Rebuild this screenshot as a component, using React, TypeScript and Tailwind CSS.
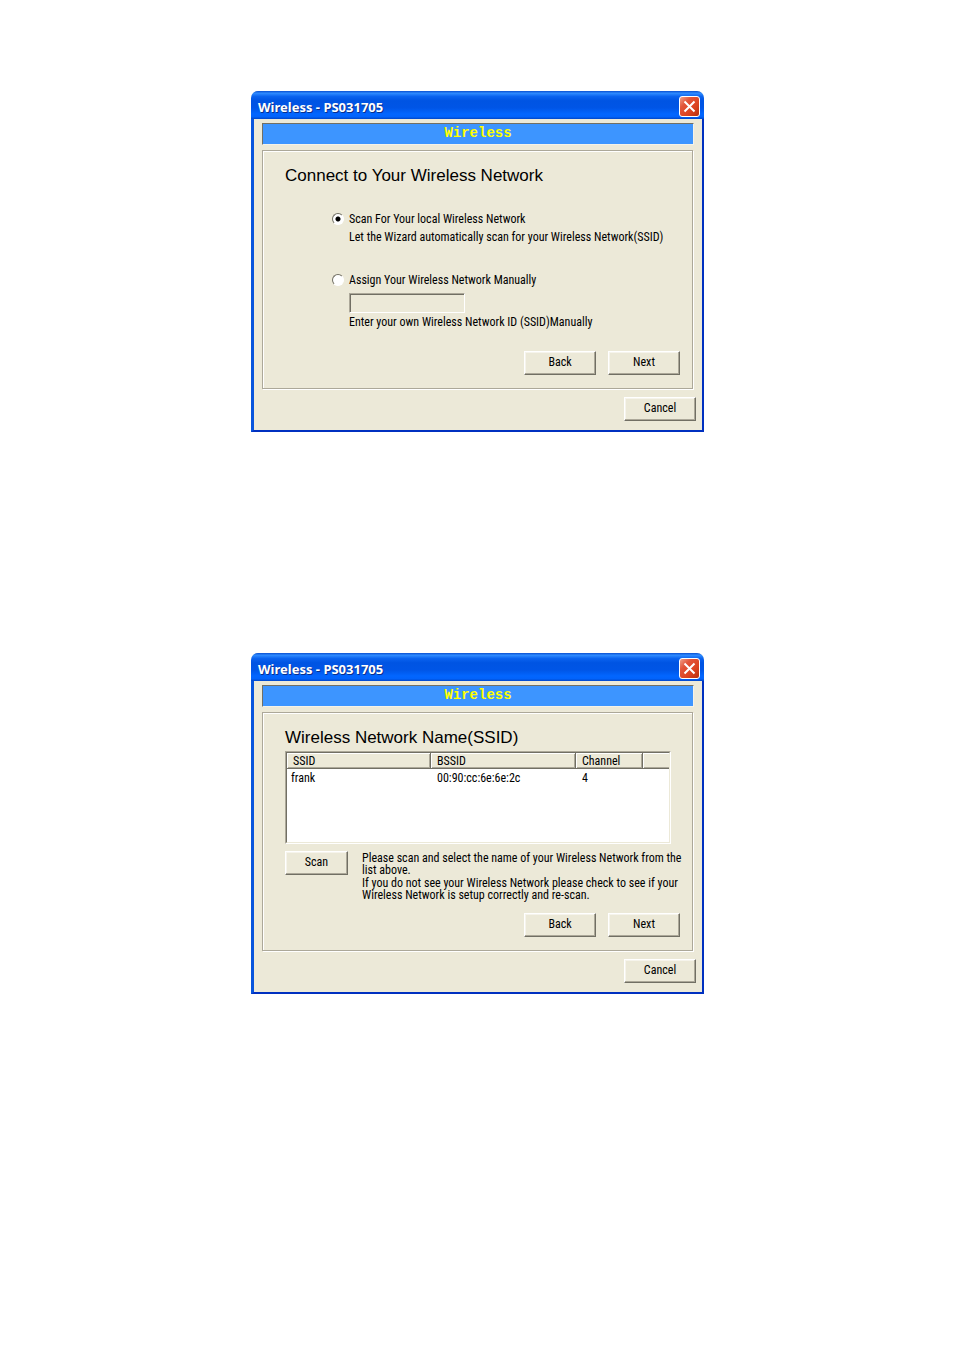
import { useState, type ReactNode } from "react";

const networks = [{ ssid: "frank", bssid: "00:90:cc:6e:6e:2c", channel: 4 }];

function Button({ children, className = "w-[72px]" }: { children: ReactNode; className?: string }) {
    return (
        <button
            type="button"
            className={`h-6 shrink-0 border border-t-white border-l-white border-r-[#716f64] border-b-[#716f64] bg-[#ece9d8] pb-0.5 text-center leading-3 shadow-[inset_-1px_-1px_0_#aca899,inset_1px_1px_0_#f6f4ec] ${className}`}
        >
            {children}
        </button>
    );
}

function Dialog({ title, heading, children }: { title: string; heading: string; children: ReactNode }) {
    return (
        <section className="w-full max-w-[453px] overflow-hidden rounded-t-[7px] bg-[#ece9d8] text-[12px] leading-3 text-black">
            <header className="flex h-7 items-center justify-between bg-[linear-gradient(180deg,#0a4fd0_0%,#2f8bff_8%,#0a62ee_20%,#0054e3_35%,#0055e6_60%,#0266ff_82%,#0263fb_92%,#0046c8_100%)] pt-0.5 pr-1 pl-[7px]">
                <h1 className="pt-px font-['Noto_Sans',sans-serif] text-[13px] leading-4 font-bold text-white [text-shadow:1px_1px_0_#0a2f8c]">{title}</h1>
                <button
                    type="button"
                    aria-label="Close"
                    className="flex size-[21px] items-center justify-center rounded-[3px] border border-white bg-[linear-gradient(135deg,#f0a08a_0%,#e2553a_30%,#dc4320_65%,#b8300c_100%)]"
                >
                    <svg viewBox="0 0 13 13" className="size-[13px]" fill="none" stroke="#fff" strokeWidth="2">
                        <path d="M1.5 1.5 11.5 11.5M11.5 1.5 1.5 11.5" />
                    </svg>
                </button>
            </header>

            <div className="border-t-0 border-r-2 border-b-2 border-l-3 border-r-[#0030c0] border-b-[#0030c0] border-l-[#0855dd] px-2 pt-1 pb-[9px]">
                <div className="h-[22px] border border-t-[#716f64] border-r-[#f4f2e8] border-b-[#f4f2e8] border-l-[#716f64] bg-[#3d95ff] text-center font-['Liberation_Mono',monospace] text-[14px] leading-[18px] font-bold text-[#ffff00]">
                    Wireless
                </div>

                {/* Etched group box */}
                <div className="mt-[5px] mr-px mb-2 flex min-h-[239px] flex-col border border-[#aca899] px-[22px] pt-[15px] pb-[13px] shadow-[1px_1px_0_#fff,inset_1px_1px_0_#fff]">
                    <h2 className="font-['Liberation_Sans',Arial,sans-serif] text-[17px] leading-5">{heading}</h2>
                    {children}
                    <div className="-mr-[10px] mt-auto flex justify-end gap-3">
                        <Button>Back</Button>
                        <Button>Next</Button>
                    </div>
                </div>

                <div className="-mr-[2px] flex justify-end">
                    <Button>Cancel</Button>
                </div>
            </div>
        </section>
    );
}

const radioClass =
    "size-3 shrink-0 appearance-none rounded-full border border-t-[#716f64] border-l-[#716f64] border-r-white border-b-white bg-white checked:bg-[radial-gradient(circle,#000_0_2px,#fff_3px)]";

function ConnectDialog() {
    const [mode, setMode] = useState("scan");

    return (
        <Dialog title="Wireless - PS031705" heading="Connect to Your Wireless Network">
            <div className="mt-[27px] ml-[47px] flex flex-col">
                <div className="flex items-center gap-[5px]">
                    <input
                        id="scan"
                        type="radio"
                        name="mode"
                        checked={mode === "scan"}
                        onChange={() => setMode("scan")}
                        className={radioClass}
                    />
                    <label htmlFor="scan">Scan For Your local Wireless Network</label>
                </div>
                <p className="mt-[6px] ml-[17px] whitespace-nowrap">
                    Let the Wizard automatically scan for your Wireless Network(SSID)
                </p>

                <div className="mt-[31px] flex items-center gap-[5px]">
                    <input
                        id="manual"
                        type="radio"
                        name="mode"
                        checked={mode === "manual"}
                        onChange={() => setMode("manual")}
                        className={radioClass}
                    />
                    <label htmlFor="manual">Assign Your Wireless Network Manually</label>
                </div>
                <input
                    id="ssid"
                    type="text"
                    aria-labelledby="ssid-hint"
                    disabled={mode === "scan"}
                    className="mt-[7px] ml-[17px] h-5 w-[116px] border border-t-[#aca899] border-r-white border-b-white border-l-[#aca899] bg-white px-1 shadow-[inset_1px_1px_0_#716f64] disabled:bg-[#ece9d8]"
                />
                <label id="ssid-hint" htmlFor="ssid" className="mt-[3px] ml-[17px]">
                    Enter your own Wireless Network ID (SSID)Manually
                </label>
            </div>
        </Dialog>
    );
}

const thClass =
    "border-r border-b border-r-[#716f64] border-b-[#716f64] bg-[#ece9d8] pl-[6px] text-left font-normal shadow-[inset_1px_1px_0_#fff,inset_-1px_-1px_0_#aca899]";

function NetworkListDialog() {
    return (
        <Dialog title="Wireless - PS031705" heading="Wireless Network Name(SSID)">
            <div className="mt-[3px] -mr-px h-[93px] border border-t-[#aca899] border-r-white border-b-white border-l-[#aca899] bg-white">
                <div className="h-full border border-t-[#716f64] border-r-[#ece9d8] border-b-[#ece9d8] border-l-[#716f64]">
                    <table className="w-full table-fixed border-separate border-spacing-0">
                        <thead>
                            <tr className="h-4">
                                <th className={`w-[144px] ${thClass}`}>SSID</th>
                                <th className={`w-[145px] ${thClass}`}>BSSID</th>
                                <th className={`w-[67px] ${thClass}`}>Channel</th>
                                <td className="border-b border-b-[#716f64] bg-[#ece9d8] shadow-[inset_1px_1px_0_#fff,inset_0_-1px_0_#aca899]" />
                            </tr>
                        </thead>
                        <tbody>
                            {networks.map((network) => (
                                <tr key={network.bssid} className="h-[18px]">
                                    <td className="pl-1">{network.ssid}</td>
                                    <td className="pl-[6px]">{network.bssid}</td>
                                    <td className="pl-[6px]">{network.channel}</td>
                                    <td />
                                </tr>
                            ))}
                        </tbody>
                    </table>
                </div>
            </div>

            <div className="mt-[7px] flex items-start gap-[14px]">
                <Button className="w-[63px]">Scan</Button>
                <div className="-mr-4 pt-px">
                    <p>
                        Please scan and select the name of your Wireless Network from the
                        <br />
                        list above.
                    </p>
                    <p className="mt-px">
                        If you do not see your Wireless Network please check to see if your
                        <br />
                        Wireless Network is setup correctly and re-scan.
                    </p>
                </div>
            </div>
        </Dialog>
    );
}

export default function App() {
    return (
        <main className="flex min-h-screen flex-col items-center gap-[221px] bg-white pt-[91px] pb-16 pl-px font-['Roboto_Condensed','Liberation_Sans',Arial,sans-serif]">
            <ConnectDialog />
            <NetworkListDialog />
        </main>
    );
}
